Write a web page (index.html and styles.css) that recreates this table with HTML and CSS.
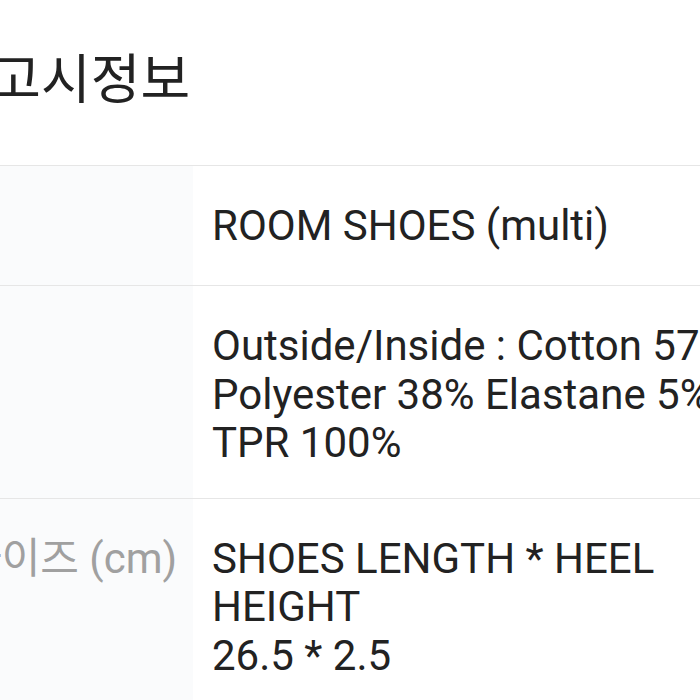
FILE: index.html
```html
<!DOCTYPE html>
<html lang="ko">
<head>
<meta charset="utf-8">
<link rel="stylesheet" href="styles.css">
</head>
<body>
<div class="page">
  <h2 class="title">상품고시정보</h2>
  <div class="info">
    <div class="row">
      <div class="label">제품명</div>
      <div class="value">ROOM SHOES (multi)</div>
    </div>
    <div class="row">
      <div class="label">소재</div>
      <div class="value">Outside/Inside : Cotton 57% Polyester 38% Elastane 5% TPR 100%</div>
    </div>
    <div class="row">
      <div class="label">사이즈 (cm)</div>
      <div class="value">SHOES LENGTH * HEEL HEIGHT<br>26.5 * 2.5</div>
    </div>
  </div>
</div>
</body>
</html>
```

FILE: styles.css
```css
html, body {
  margin: 0;
  padding: 0;
  overflow: hidden;
  background: #fff;
}
body {
  width: 700px;
  height: 700px;
  font-family: Roboto, "Noto Sans CJK KR", sans-serif;
  color: #222;
}
.page {
  margin-left: -140px;
  width: 1100px;
  padding-top: 38px;
}
.title {
  margin: 0;
  padding-left: 32px;
  font-family: "Noto Sans CJK KR", sans-serif;
  font-weight: 400;
  font-size: 54px;
  line-height: 76px;
  color: #222;
  height: 127px;
}
.info {
  border-top: 1px solid #e6e6e6;
}
.row {
  display: grid;
  grid-template-columns: 333px 1fr;
  border-bottom: 1px solid #e6e6e6;
  min-height: 119px;
}
.label {
  background: #fafbfc;
  color: #a0a0a0;
  font-size: 42px;
  line-height: 48.5px;
  padding: 36px 0 30px 103px;
}
.row:nth-child(1) .label,
.row:nth-child(2) .label {
  color: transparent;
}
.value {
  font-size: 42px;
  line-height: 48.5px;
  padding: 36px 0 30px 19px;
  width: 560px;
  color: #222;
}
```
